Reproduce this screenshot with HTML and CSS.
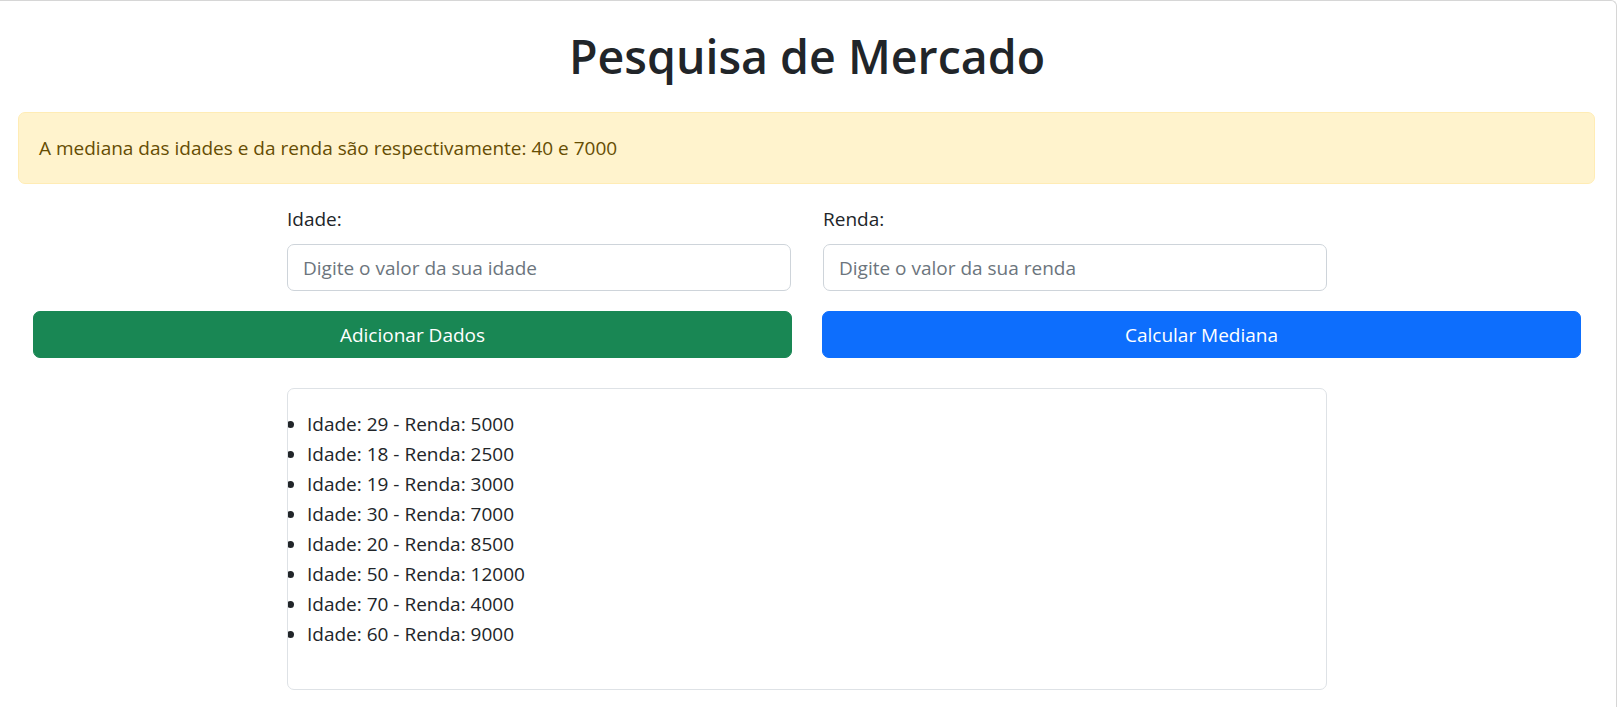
FILE: index.html
```html
<!DOCTYPE html>
<html lang="pt-BR">
<head>
<meta charset="utf-8">
<title>Pesquisa de Mercado</title>
<link rel="stylesheet" href="styles.css">
</head>
<body>
<div class="frame">
  <div class="container">
    <h1 class="title">Pesquisa de Mercado</h1>
    <div class="alert">A mediana das idades e da renda são respectivamente: 40 e 7000</div>
    <div class="fields">
      <div class="field">
        <label class="label" for="idade">Idade:</label>
        <input class="input" id="idade" type="text" placeholder="Digite o valor da sua idade">
      </div>
      <div class="field">
        <label class="label" for="renda">Renda:</label>
        <input class="input" id="renda" type="text" placeholder="Digite o valor da sua renda">
      </div>
    </div>
    <div class="actions">
      <button class="btn btn-green" type="button">Adicionar Dados</button>
      <button class="btn btn-blue" type="button">Calcular Mediana</button>
    </div>
    <div class="list-box">
      <ul class="list">
        <li>Idade: 29 - Renda: 5000</li>
        <li>Idade: 18 - Renda: 2500</li>
        <li>Idade: 19 - Renda: 3000</li>
        <li>Idade: 30 - Renda: 7000</li>
        <li>Idade: 20 - Renda: 8500</li>
        <li>Idade: 50 - Renda: 12000</li>
        <li>Idade: 70 - Renda: 4000</li>
        <li>Idade: 60 - Renda: 9000</li>
      </ul>
    </div>
  </div>
</div>
</body>
</html>
```
FILE: styles.css
```css
* { box-sizing: border-box; }

html, body {
  margin: 0;
  padding: 0;
  background: #fff;
}

body {
  font-family: "Open Sans", "Noto Sans", sans-serif;
  font-size: 19px;
  line-height: 30px;
  color: #212529;
}

.frame {
  height: 707px;
  border-top: 1px solid #d6d6d6;
  border-right: 1px solid #d6d6d6;
  border-top-right-radius: 6px;
  overflow: hidden;
}

.container {
  width: 1578px;
  margin-left: 18px;
}

.title {
  margin: 25px 0 0;
  height: 60px;
  font-size: 46.5px;
  line-height: 60px;
  font-weight: 600;
  text-align: center;
  color: #212529;
}

.alert {
  margin-top: 26px;
  width: 1577px;
  padding: 20px;
  border: 1px solid #ffecb5;
  border-radius: 7px;
  background: #fff3cd;
  color: #664d03;
}

.fields {
  width: 1040px;
  margin: 20px auto 0;
  display: grid;
  grid-template-columns: 504px 504px;
  column-gap: 32px;
}

.field {
  display: flex;
  flex-direction: column;
}

.label {
  display: block;
  margin-bottom: 10px;
  color: #212529;
}

.input {
  height: 47px;
  width: 100%;
  padding: 7px 15px;
  border: 1px solid #ced4da;
  border-radius: 7px;
  font-family: inherit;
  font-size: 19px;
  line-height: 30px;
  color: #212529;
  background: #fff;
}

.input::placeholder {
  color: #6c757d;
  opacity: 1;
}

.actions {
  margin-top: 20px;
  padding: 0 15px;
  display: grid;
  grid-template-columns: 1fr 1fr;
  column-gap: 30px;
}

.btn {
  height: 47px;
  padding: 7px 15px;
  border: 1px solid transparent;
  border-radius: 7px;
  font-family: inherit;
  font-size: 19px;
  line-height: 30px;
  color: #fff;
  text-align: center;
  cursor: pointer;
}

.btn-green {
  background: #198754;
  border-color: #198754;
}

.btn-blue {
  background: #0d6efd;
  border-color: #0d6efd;
}

.list-box {
  width: 1040px;
  height: 302px;
  margin: 30px auto 0;
  border: 1px solid #dee2e6;
  border-radius: 7px;
  overflow: hidden;
}

.list {
  margin: 20px 0;
  padding-left: 19px;
}

.list li {
  line-height: 30px;
}
```
